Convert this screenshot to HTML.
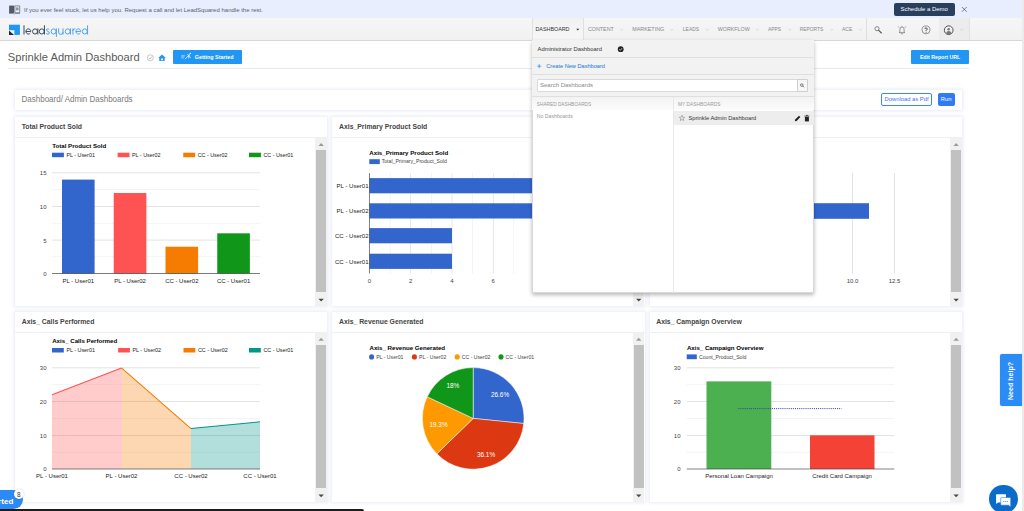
<!DOCTYPE html><html><head><meta charset="utf-8"><title>Sprinkle Admin Dashboard</title><style>
html,body{margin:0;padding:0;background:#fff;}
body{width:1024px;height:511px;overflow:hidden;position:relative;font-family:"Liberation Sans",sans-serif;}
.t{position:absolute;white-space:nowrap;line-height:1;}
.b{position:absolute;box-sizing:border-box;}
svg{position:absolute;left:0;top:0;overflow:visible;}
svg text{font-family:"Liberation Sans",sans-serif;}
.card{background:#fff;box-shadow:0 0 3px 1px rgba(228,232,246,.85);}
.hd{background:#fff;border-bottom:0.9px solid #f0f0f3;}
</style></head><body>
<div class="b " style="left:0.00px;top:0.00px;width:1024.00px;height:18.00px;background:#e8eefe;"></div>
<svg class="tx" width="1024" height="511"><text x="24.00" y="12" font-size="6.0" fill="#5a5f6b">If you ever feel stuck, let us help you. Request a call and let LeadSquared handle the rest.</text></svg>
<div class="b " style="left:893.75px;top:2.75px;width:60.75px;height:13.00px;background:#293f5e;border-radius:2px;"></div>
<svg class="tx" width="1024" height="511"><text x="924.20" y="11" font-size="5.94" fill="#fff" text-anchor="middle">Schedule a Demo</text></svg>
<div class="b " style="left:0.00px;top:18.20px;width:1024.00px;height:22.40px;background:linear-gradient(#f6f6f6,#f1f1f1);border-bottom:0.8px solid #d8d8d8;"></div>
<div class="b " style="left:531.50px;top:18.20px;width:52.10px;height:22.80px;background:linear-gradient(#f1f1f1,#f7f7f7);border-left:0.7px solid #e0e0e0;border-right:0.7px solid #e0e0e0;"></div>
<div class="b " style="left:938.75px;top:18.20px;width:30.85px;height:21.80px;background:#ececec;border-right:0.7px solid #e2e2e2;"></div>
<div class="b " style="left:866.00px;top:18.20px;width:0.80px;height:21.80px;background:#dedede;"></div>
<svg class="tx" width="1024" height="511"><text x="535.50" y="31" font-size="5.37" fill="#333">DASHBOARD</text></svg>
<svg class="tx" width="1024" height="511"><text x="588.00" y="31" font-size="5.33" fill="#888">CONTENT</text></svg>
<svg class="tx" width="1024" height="511"><text x="632.25" y="31" font-size="5.38" fill="#888">MARKETING</text></svg>
<svg class="tx" width="1024" height="511"><text x="682.75" y="31" font-size="5.03" fill="#888">LEADS</text></svg>
<svg class="tx" width="1024" height="511"><text x="717.75" y="31" font-size="5.33" fill="#888">WORKFLOW</text></svg>
<svg class="tx" width="1024" height="511"><text x="768.00" y="31" font-size="4.87" fill="#888">APPS</text></svg>
<svg class="tx" width="1024" height="511"><text x="799.75" y="31" font-size="4.88" fill="#888">REPORTS</text></svg>
<svg class="tx" width="1024" height="511"><text x="842.00" y="31" font-size="4.98" fill="#888">ACE</text></svg>
<svg class="tx" width="1024" height="511"><text x="7.75" y="61" font-size="11.15" fill="#5a5a5a">Sprinkle Admin Dashboard</text></svg>
<div class="b " style="left:172.90px;top:50.00px;width:69.10px;height:13.60px;background:#2196f3;border-radius:1px;"></div>
<svg class="tx" width="1024" height="511"><text x="194.70" y="59" font-size="5.4" fill="#fff" font-weight="700">Getting Started</text></svg>
<div class="b " style="left:911.00px;top:50.00px;width:57.80px;height:13.70px;background:#2196f3;border-radius:1px;"></div>
<svg class="tx" width="1024" height="511"><text x="940.10" y="59" font-size="5.24" fill="#fff" font-weight="700" text-anchor="middle">Edit Report URL</text></svg>
<div class="b " style="left:7.50px;top:68.00px;width:961.30px;height:0.90px;background:#e9e9e9;"></div>
<div class="b card" style="left:14.90px;top:89.50px;width:947.20px;height:20.10px;"></div>
<svg class="tx" width="1024" height="511"><text x="21.60" y="102" font-size="8.5" fill="#7a7a7a" textLength="111" lengthAdjust="spacingAndGlyphs">Dashboard/ Admin Dashboards</text></svg>
<div class="b " style="left:881.00px;top:93.30px;width:51.00px;height:12.60px;border:0.75px solid #3d84ff;border-radius:2px;background:#fff;"></div>
<svg class="tx" width="1024" height="511"><text x="906.60" y="101" font-size="5.82" fill="#4a6ff5" text-anchor="middle">Download as Pdf</text></svg>
<div class="b " style="left:937.90px;top:93.30px;width:16.70px;height:12.60px;background:#2f7bf6;border-radius:2px;"></div>
<svg class="tx" width="1024" height="511"><text x="946.10" y="101" font-size="5.72" fill="#fff" text-anchor="middle">Run</text></svg>
<div class="b card" style="left:15.00px;top:116.70px;width:312.00px;height:189.60px;"></div>
<div class="b hd" style="left:15.00px;top:116.70px;width:312.00px;height:21.00px;"></div>
<svg class="tx" width="1024" height="511"><text x="21.70" y="129" font-size="6.85" fill="#444" font-weight="700">Total Product Sold</text></svg>
<div class="b " style="left:315.40px;top:137.70px;width:11.30px;height:168.60px;background:#f1f1f1;"></div>
<div class="b " style="left:316.35px;top:150.10px;width:9.65px;height:142.20px;background:#c1c1c1;"></div>
<svg width="1024" height="511"><path d="M318.45 146.00L321.15 142.90L323.85 146.00Z" fill="#9a9a9a"/><path d="M318.45 298.80L321.15 301.60L323.85 298.80Z" fill="#484848"/></svg>
<div class="b card" style="left:332.30px;top:116.70px;width:312.30px;height:189.60px;"></div>
<div class="b hd" style="left:332.30px;top:116.70px;width:312.30px;height:21.00px;"></div>
<svg class="tx" width="1024" height="511"><text x="339.00" y="129" font-size="6.85" fill="#444" font-weight="700">Axis_Primary Product Sold</text></svg>
<div class="b " style="left:633.00px;top:137.70px;width:11.30px;height:168.60px;background:#f1f1f1;"></div>
<div class="b " style="left:633.95px;top:150.10px;width:9.65px;height:142.20px;background:#c1c1c1;"></div>
<svg width="1024" height="511"><path d="M636.05 146.00L638.75 142.90L641.45 146.00Z" fill="#9a9a9a"/><path d="M636.05 298.80L638.75 301.60L641.45 298.80Z" fill="#484848"/></svg>
<div class="b card" style="left:649.50px;top:116.70px;width:312.50px;height:189.60px;"></div>
<div class="b hd" style="left:649.50px;top:116.70px;width:312.50px;height:21.00px;"></div>
<div class="b " style="left:950.40px;top:137.70px;width:11.30px;height:168.60px;background:#f1f1f1;"></div>
<div class="b " style="left:951.35px;top:150.10px;width:9.65px;height:142.20px;background:#c1c1c1;"></div>
<svg width="1024" height="511"><path d="M953.45 146.00L956.15 142.90L958.85 146.00Z" fill="#9a9a9a"/><path d="M953.45 298.80L956.15 301.60L958.85 298.80Z" fill="#484848"/></svg>
<div class="b card" style="left:15.00px;top:311.80px;width:312.00px;height:190.10px;"></div>
<div class="b hd" style="left:15.00px;top:311.80px;width:312.00px;height:21.10px;"></div>
<svg class="tx" width="1024" height="511"><text x="21.70" y="324" font-size="6.85" fill="#444" font-weight="700">Axis_ Calls Performed</text></svg>
<div class="b " style="left:315.40px;top:332.90px;width:11.30px;height:169.00px;background:#f1f1f1;"></div>
<div class="b " style="left:316.35px;top:344.60px;width:9.65px;height:143.30px;background:#c1c1c1;"></div>
<svg width="1024" height="511"><path d="M318.45 340.70L321.15 337.70L323.85 340.70Z" fill="#9a9a9a"/><path d="M318.45 494.40L321.15 497.20L323.85 494.40Z" fill="#484848"/></svg>
<div class="b card" style="left:332.30px;top:311.80px;width:312.30px;height:190.10px;"></div>
<div class="b hd" style="left:332.30px;top:311.80px;width:312.30px;height:21.10px;"></div>
<svg class="tx" width="1024" height="511"><text x="339.00" y="324" font-size="6.85" fill="#444" font-weight="700">Axis_ Revenue Generated</text></svg>
<div class="b " style="left:633.00px;top:332.90px;width:11.30px;height:169.00px;background:#f1f1f1;"></div>
<div class="b " style="left:633.95px;top:344.60px;width:9.65px;height:143.30px;background:#c1c1c1;"></div>
<svg width="1024" height="511"><path d="M636.05 340.70L638.75 337.70L641.45 340.70Z" fill="#9a9a9a"/><path d="M636.05 494.40L638.75 497.20L641.45 494.40Z" fill="#484848"/></svg>
<div class="b card" style="left:649.50px;top:311.80px;width:312.50px;height:190.10px;"></div>
<div class="b hd" style="left:649.50px;top:311.80px;width:312.50px;height:21.10px;"></div>
<svg class="tx" width="1024" height="511"><text x="656.20" y="324" font-size="6.85" fill="#444" font-weight="700">Axis_ Campaign Overview</text></svg>
<div class="b " style="left:950.40px;top:332.90px;width:11.30px;height:169.00px;background:#f1f1f1;"></div>
<div class="b " style="left:951.35px;top:344.60px;width:9.65px;height:143.30px;background:#c1c1c1;"></div>
<svg width="1024" height="511"><path d="M953.45 340.70L956.15 337.70L958.85 340.70Z" fill="#9a9a9a"/><path d="M953.45 494.40L956.15 497.20L958.85 494.40Z" fill="#484848"/></svg>
<svg width="1024" height="511" viewBox="0 0 1024 511"><text x="52.20" y="148.00" font-size="6.13" fill="#000" font-weight="700" text-anchor="start">Total Product Sold</text><rect x="52.00" y="152.70" width="11.90" height="4.50" fill="#3366cc"/><text x="66.40" y="157.00" font-size="5.38" fill="#222" font-weight="400" text-anchor="start">PL - User01</text><rect x="117.60" y="152.70" width="11.90" height="4.50" fill="#ff5252"/><text x="132.00" y="157.00" font-size="5.38" fill="#222" font-weight="400" text-anchor="start">PL - User02</text><rect x="183.25" y="152.70" width="11.90" height="4.50" fill="#f57c00"/><text x="197.65" y="157.00" font-size="5.38" fill="#222" font-weight="400" text-anchor="start">CC - User02</text><rect x="249.00" y="152.70" width="11.90" height="4.50" fill="#109618"/><text x="263.40" y="157.00" font-size="5.38" fill="#222" font-weight="400" text-anchor="start">CC - User01</text><rect x="52.00" y="256.54" width="208.00" height="0.55" fill="#ebebeb"/><rect x="52.00" y="222.97" width="208.00" height="0.55" fill="#ebebeb"/><rect x="52.00" y="189.40" width="208.00" height="0.55" fill="#ebebeb"/><rect x="52.00" y="239.76" width="208.00" height="0.55" fill="#cccccc"/><rect x="52.00" y="206.19" width="208.00" height="0.55" fill="#cccccc"/><rect x="52.00" y="172.62" width="208.00" height="0.55" fill="#cccccc"/><text x="46.50" y="276.10" font-size="6.0" fill="#444" font-weight="400" text-anchor="end">0</text><text x="46.50" y="242.53" font-size="6.0" fill="#444" font-weight="400" text-anchor="end">5</text><text x="46.50" y="208.96" font-size="6.0" fill="#444" font-weight="400" text-anchor="end">10</text><text x="46.50" y="175.39" font-size="6.0" fill="#444" font-weight="400" text-anchor="end">15</text><rect x="62.00" y="179.60" width="32.60" height="94.00" fill="#3366cc"/><text x="78.30" y="283.20" font-size="6.0" fill="#222" font-weight="400" text-anchor="middle">PL - User01</text><rect x="113.75" y="193.03" width="32.60" height="80.57" fill="#ff5252"/><text x="130.05" y="283.20" font-size="6.0" fill="#222" font-weight="400" text-anchor="middle">PL - User02</text><rect x="165.50" y="246.74" width="32.60" height="26.86" fill="#f57c00"/><text x="181.80" y="283.20" font-size="6.0" fill="#222" font-weight="400" text-anchor="middle">CC - User02</text><rect x="217.25" y="233.32" width="32.60" height="40.28" fill="#109618"/><text x="233.55" y="283.20" font-size="6.0" fill="#222" font-weight="400" text-anchor="middle">CC - User01</text><rect x="52.00" y="273.05" width="208.00" height="0.70" fill="#444"/><text x="369.30" y="155.00" font-size="6.13" fill="#000" font-weight="700" text-anchor="start">Axis_Primary Product Sold</text><rect x="369.30" y="159.20" width="10.50" height="4.90" fill="#3366cc"/><text x="381.70" y="163.00" font-size="5.15" fill="#444" font-weight="400" text-anchor="start">Total_Primary_Product_Sold</text><rect x="389.85" y="173.00" width="0.55" height="100.50" fill="#ebebeb"/><rect x="431.09" y="173.00" width="0.55" height="100.50" fill="#ebebeb"/><rect x="472.33" y="173.00" width="0.55" height="100.50" fill="#ebebeb"/><rect x="513.57" y="173.00" width="0.55" height="100.50" fill="#ebebeb"/><rect x="410.47" y="173.00" width="0.55" height="100.50" fill="#d6d6d6"/><rect x="451.71" y="173.00" width="0.55" height="100.50" fill="#d6d6d6"/><rect x="492.95" y="173.00" width="0.55" height="100.50" fill="#d6d6d6"/><rect x="534.19" y="173.00" width="0.55" height="100.50" fill="#d6d6d6"/><text x="369.50" y="283.20" font-size="6.0" fill="#444" font-weight="400" text-anchor="middle">0</text><text x="410.74" y="283.20" font-size="6.0" fill="#444" font-weight="400" text-anchor="middle">2</text><text x="451.98" y="283.20" font-size="6.0" fill="#444" font-weight="400" text-anchor="middle">4</text><text x="493.22" y="283.20" font-size="6.0" fill="#444" font-weight="400" text-anchor="middle">6</text><rect x="369.50" y="178.10" width="185.58" height="15.20" fill="#3366cc"/><text x="368.60" y="188.00" font-size="6.05" fill="#222" font-weight="400" text-anchor="end">PL - User01</text><rect x="369.50" y="203.30" width="185.58" height="15.20" fill="#3366cc"/><text x="368.60" y="213.20" font-size="6.05" fill="#222" font-weight="400" text-anchor="end">PL - User02</text><rect x="369.50" y="228.10" width="82.48" height="15.20" fill="#3366cc"/><text x="368.60" y="238.00" font-size="6.05" fill="#222" font-weight="400" text-anchor="end">CC - User02</text><rect x="369.50" y="253.70" width="82.48" height="15.20" fill="#3366cc"/><text x="368.60" y="263.60" font-size="6.05" fill="#222" font-weight="400" text-anchor="end">CC - User01</text><rect x="369.20" y="173.00" width="0.6" height="100.50" fill="#333333"/><rect x="852.33" y="173.00" width="0.55" height="100.50" fill="#cccccc"/><text x="852.60" y="283.20" font-size="6.0" fill="#444" font-weight="400" text-anchor="middle">10.0</text><rect x="894.23" y="173.00" width="0.55" height="100.50" fill="#cccccc"/><text x="894.50" y="283.20" font-size="6.0" fill="#444" font-weight="400" text-anchor="middle">12.5</text><rect x="685.00" y="203.20" width="184.00" height="15.60" fill="#3366cc"/><text x="52.20" y="343.00" font-size="6.13" fill="#000" font-weight="700" text-anchor="start">Axis_ Calls Performed</text><rect x="52.00" y="348.00" width="11.80" height="4.50" fill="#3366cc"/><text x="66.40" y="352.00" font-size="5.38" fill="#222" font-weight="400" text-anchor="start">PL - User01</text><rect x="118.10" y="348.00" width="11.80" height="4.50" fill="#ff5252"/><text x="132.50" y="352.00" font-size="5.38" fill="#222" font-weight="400" text-anchor="start">PL - User02</text><rect x="183.50" y="348.00" width="11.80" height="4.50" fill="#f57c00"/><text x="197.90" y="352.00" font-size="5.38" fill="#222" font-weight="400" text-anchor="start">CC - User02</text><rect x="249.00" y="348.00" width="11.80" height="4.50" fill="#009688"/><text x="263.40" y="352.00" font-size="5.38" fill="#222" font-weight="400" text-anchor="start">CC - User01</text><rect x="52.00" y="451.88" width="208.00" height="0.55" fill="#ebebeb"/><rect x="52.00" y="418.18" width="208.00" height="0.55" fill="#ebebeb"/><rect x="52.00" y="384.48" width="208.00" height="0.55" fill="#ebebeb"/><rect x="52.00" y="435.03" width="208.00" height="0.55" fill="#cccccc"/><rect x="52.00" y="401.33" width="208.00" height="0.55" fill="#cccccc"/><rect x="52.00" y="367.62" width="208.00" height="0.55" fill="#cccccc"/><text x="46.50" y="471.30" font-size="6.0" fill="#444" font-weight="400" text-anchor="end">0</text><text x="46.50" y="437.60" font-size="6.0" fill="#444" font-weight="400" text-anchor="end">10</text><text x="46.50" y="403.90" font-size="6.0" fill="#444" font-weight="400" text-anchor="end">20</text><text x="46.50" y="370.20" font-size="6.0" fill="#444" font-weight="400" text-anchor="end">30</text><path d="M52.00 469.0L52.00 394.86L121.50 367.90L121.50 469.0Z" fill="rgba(255,82,82,0.3)" shape-rendering="crispEdges"/><path d="M121.50 469.0L121.50 367.90L191.00 428.56L191.00 469.0Z" fill="rgba(245,124,0,0.3)" shape-rendering="crispEdges"/><path d="M191.00 469.0L191.00 428.56L260.00 421.82L260.00 469.0Z" fill="rgba(0,150,136,0.3)" shape-rendering="crispEdges"/><path d="M52.00 394.86L121.50 367.90" stroke="#ff5252" stroke-width="1.05" fill="none"/><path d="M121.50 367.90L191.00 428.56" stroke="#f57c00" stroke-width="1.05" fill="none"/><path d="M191.00 428.56L260.00 421.82" stroke="#009688" stroke-width="1.05" fill="none"/><rect x="52.00" y="468.70" width="208.00" height="0.6" fill="#333333"/><text x="52.00" y="478.00" font-size="6.0" fill="#222" font-weight="400" text-anchor="middle">PL - User01</text><text x="121.50" y="478.00" font-size="6.0" fill="#222" font-weight="400" text-anchor="middle">PL - User02</text><text x="191.00" y="478.00" font-size="6.0" fill="#222" font-weight="400" text-anchor="middle">CC - User02</text><text x="260.00" y="478.00" font-size="6.0" fill="#222" font-weight="400" text-anchor="middle">CC - User01</text><text x="369.50" y="350.00" font-size="6.13" fill="#000" font-weight="700" text-anchor="start">Axis_ Revenue Generated</text><circle cx="371.6" cy="356.9" r="2.55" fill="#3366cc"/><text x="376.20" y="359.00" font-size="5.15" fill="#444" font-weight="400" text-anchor="start">PL - User01</text><circle cx="414.4" cy="356.9" r="2.55" fill="#dc3912"/><text x="419.00" y="359.00" font-size="5.15" fill="#444" font-weight="400" text-anchor="start">PL - User02</text><circle cx="457.2" cy="356.9" r="2.55" fill="#ff9900"/><text x="461.80" y="359.00" font-size="5.15" fill="#444" font-weight="400" text-anchor="start">CC - User02</text><circle cx="501" cy="356.9" r="2.55" fill="#109618"/><text x="505.60" y="359.00" font-size="5.15" fill="#444" font-weight="400" text-anchor="start">CC - User01</text><path d="M473.2 418.4L473.20 367.60A50.8 50.8 0 0 1 523.74 423.50Z" fill="#3366cc" stroke="#fff" stroke-width="0.5"/><path d="M473.2 418.4L523.74 423.50A50.8 50.8 0 0 1 436.83 453.87Z" fill="#dc3912" stroke="#fff" stroke-width="0.5"/><path d="M473.2 418.4L436.83 453.87A50.8 50.8 0 0 1 427.23 396.77Z" fill="#ff9900" stroke="#fff" stroke-width="0.5"/><path d="M473.2 418.4L427.23 396.77A50.8 50.8 0 0 1 473.20 367.60Z" fill="#109618" stroke="#fff" stroke-width="0.5"/><text x="500.00" y="397.00" font-size="6.4" fill="#fff" font-weight="400" text-anchor="middle">26.6%</text><text x="486.00" y="457.00" font-size="6.4" fill="#fff" font-weight="400" text-anchor="middle">36.1%</text><text x="438.50" y="427.00" font-size="6.4" fill="#fff" font-weight="400" text-anchor="middle">19.3%</text><text x="452.90" y="388.00" font-size="6.4" fill="#fff" font-weight="400" text-anchor="middle">18%</text><text x="686.90" y="350.00" font-size="6.13" fill="#000" font-weight="700" text-anchor="start">Axis_ Campaign Overview</text><rect x="686.70" y="354.40" width="10.10" height="4.80" fill="#3366cc"/><text x="699.00" y="359.00" font-size="5.15" fill="#444" font-weight="400" text-anchor="start">Count_Product_Sold</text><rect x="686.70" y="451.88" width="207.60" height="0.55" fill="#ebebeb"/><rect x="686.70" y="418.18" width="207.60" height="0.55" fill="#ebebeb"/><rect x="686.70" y="384.48" width="207.60" height="0.55" fill="#ebebeb"/><rect x="686.70" y="435.03" width="207.60" height="0.55" fill="#cccccc"/><rect x="686.70" y="401.33" width="207.60" height="0.55" fill="#cccccc"/><rect x="686.70" y="367.62" width="207.60" height="0.55" fill="#cccccc"/><text x="680.50" y="471.30" font-size="6.0" fill="#444" font-weight="400" text-anchor="end">0</text><text x="680.50" y="437.60" font-size="6.0" fill="#444" font-weight="400" text-anchor="end">10</text><text x="680.50" y="403.90" font-size="6.0" fill="#444" font-weight="400" text-anchor="end">20</text><text x="680.50" y="370.20" font-size="6.0" fill="#444" font-weight="400" text-anchor="end">30</text><rect x="706.50" y="381.38" width="64.80" height="87.62" fill="#4caf50"/><rect x="810.00" y="435.30" width="64.50" height="33.70" fill="#f44336"/><path d="M738.3 408.6L841.5 408.6" stroke="#3a3fb0" stroke-width="1" stroke-dasharray="1.05 1.05" fill="none"/><rect x="686.70" y="468.70" width="207.60" height="0.6" fill="#333333"/><text x="739.00" y="478.00" font-size="6.0" fill="#222" font-weight="400" text-anchor="middle">Personal Loan Campaign</text><text x="842.00" y="478.00" font-size="6.0" fill="#222" font-weight="400" text-anchor="middle">Credit Card Campaign</text></svg>
<div class="b " style="left:532.00px;top:40.40px;width:282.00px;height:252.90px;background:#fff;box-shadow:0 1.5px 4px rgba(0,0,0,.28);border:0.5px solid #d9d9d9;border-top:none;"></div>
<div class="b " style="left:532.00px;top:40.40px;width:282.00px;height:17.60px;background:#f2f2f2;border-bottom:0.6px solid #dfdfdf;"></div>
<div class="b " style="left:532.00px;top:58.00px;width:282.00px;height:16.70px;background:#f2f2f2;border-bottom:0.6px solid #dfdfdf;"></div>
<div class="b " style="left:532.00px;top:74.70px;width:282.00px;height:22.00px;background:#f2f2f2;border-bottom:0.6px solid #dfdfdf;"></div>
<svg class="tx" width="1024" height="511"><text x="537.50" y="51" font-size="5.83" fill="#333">Administrator Dashboard</text></svg>
<svg class="tx" width="1024" height="511"><text x="546.30" y="68" font-size="5.61" fill="#1976d2">Create New Dashboard</text></svg>
<div class="b " style="left:536.60px;top:79.40px;width:271.40px;height:12.30px;background:#fff;border:0.6px solid #d9d9d9;border-radius:1px;"></div>
<div class="b " style="left:796.50px;top:79.40px;width:11.50px;height:12.30px;background:#f7f7f7;border:0.6px solid #cfcfcf;border-radius:0 1px 1px 0;"></div>
<svg class="tx" width="1024" height="511"><text x="540.00" y="87" font-size="6.0" fill="#8a8a8a">Search Dashboards</text></svg>
<div class="b " style="left:532.00px;top:96.70px;width:282.00px;height:13.30px;background:linear-gradient(#f3f3f3,#fcfcfc);"></div>
<svg class="tx" width="1024" height="511"><text x="536.80" y="106" font-size="4.76" fill="#999">SHARED DASHBOARDS</text></svg>
<svg class="tx" width="1024" height="511"><text x="536.80" y="118" font-size="5.18" fill="#999">No Dashboards</text></svg>
<div class="b " style="left:673.00px;top:96.70px;width:0.60px;height:196.60px;background:#e8e8e8;"></div>
<svg class="tx" width="1024" height="511"><text x="678.00" y="106" font-size="4.85" fill="#999">MY DASHBOARDS</text></svg>
<div class="b " style="left:673.60px;top:111.20px;width:140.20px;height:13.50px;background:#ededed;"></div>
<svg class="tx" width="1024" height="511"><text x="688.40" y="120" font-size="5.74" fill="#333">Sprinkle Admin Dashboard</text></svg>
<svg width="1024" height="511" viewBox="0 0 1024 511"><path d="M9.1 5.6L14.2 5.6L14.2 13.0L9.1 13.0Z" fill="#555a66"/><path d="M14.9 5.9L19.7 5.9L19.7 12.7L14.9 12.7Z" fill="#f4f5fb" stroke="#555a66" stroke-width="0.7"/><rect x="16.1" y="7.4" width="2.5" height="3.0" fill="#8d909a"/><path d="M9 13.5L13.6 13.5L14.5 14.0L15.4 13.5L20 13.5" stroke="#555a66" stroke-width="0.6" fill="none"/><path d="M961.9 7.0L966.7 11.8M966.7 7.0L961.9 11.8" stroke="#555" stroke-width="0.75" fill="none"/><rect x="9" y="24.7" width="10.9" height="10.2" fill="#2196f3"/><rect x="9" y="30.2" width="5.4" height="4.7" fill="#f5f5f5"/><path d="M9 30.4L9 34.9L14.0 34.9Z" fill="#16283f"/><path d="M24 25.3V34.5M25.90 31.45H30.80A2.45 2.6 0 1 0 30.28 33.05M32.55 31.45A2.45 2.6 0 1 0 37.45 31.45A2.45 2.6 0 1 0 32.55 31.45ZM37.85 28.4V34.5M39.30 31.45A2.45 2.6 0 1 0 44.20 31.45A2.45 2.6 0 1 0 39.30 31.45ZM44.45 25.3V34.5" fill="none" stroke="#2c4055" stroke-width="0.95"/><path d="M49.3 29.7C48.7 28.5 46.5 28.5 46.5 30.0C46.5 31.5 49.4 31.2 49.4 33.0C49.4 34.6 46.8 34.5 46.1 33.2M51.15 31.45A2.45 2.6 0 1 0 56.05 31.45A2.45 2.6 0 1 0 51.15 31.45ZM56.4 28.4V36.9M58.6 28.4V32.1A2.2 2.3 0 0 0 63 32.1M63 28.4V34.5M65.25 31.45A2.45 2.6 0 1 0 70.15 31.45A2.45 2.6 0 1 0 65.25 31.45ZM70.5 28.4V34.5M72.9 28.4V34.5M72.9 30.8A2.3 2.3 0 0 1 75.3 28.8M75.95 31.45H80.85A2.45 2.6 0 1 0 80.33 33.05M82.35 31.45A2.45 2.6 0 1 0 87.25 31.45A2.45 2.6 0 1 0 82.35 31.45ZM87.55 25.3V34.5" fill="none" stroke="#45a0f6" stroke-width="0.95"/><path d="M576.2 28.8L579.3 28.8L577.75 30.6Z" fill="#333"/><path d="M620.45 29.1L621.75 30.4L623.05 29.1" stroke="#c4c4c4" stroke-width="0.6" fill="none"/><path d="M670.45 29.1L671.75 30.4L673.05 29.1" stroke="#c4c4c4" stroke-width="0.6" fill="none"/><path d="M706.20 29.1L707.50 30.4L708.80 29.1" stroke="#c4c4c4" stroke-width="0.6" fill="none"/><path d="M756.20 29.1L757.50 30.4L758.80 29.1" stroke="#c4c4c4" stroke-width="0.6" fill="none"/><path d="M788.45 29.1L789.75 30.4L791.05 29.1" stroke="#c4c4c4" stroke-width="0.6" fill="none"/><path d="M830.20 29.1L831.50 30.4L832.80 29.1" stroke="#c4c4c4" stroke-width="0.6" fill="none"/><path d="M859.20 29.1L860.50 30.4L861.80 29.1" stroke="#c4c4c4" stroke-width="0.6" fill="none"/><path d="M960.45 29.1L961.75 30.4L963.05 29.1" stroke="#c4c4c4" stroke-width="0.6" fill="none"/><circle cx="877.0" cy="28.7" r="2.1" fill="none" stroke="#666" stroke-width="0.75"/><path d="M878.7 30.4L881.4 33.0" stroke="#555" stroke-width="1.1" stroke-linecap="round"/><path d="M899.9 32.0L899.9 29.4A2.1 2.4 0 0 1 904.1 29.4L904.1 32.0L904.9 32.6L899.1 32.6Z" fill="none" stroke="#666" stroke-width="0.65" stroke-linejoin="round"/><path d="M901.2 33.3A0.8 0.8 0 0 0 902.8 33.3" fill="none" stroke="#666" stroke-width="0.6"/><path d="M899.2 27.7L898.2 26.5M904.8 27.7L905.8 26.5M902 26.7L902 25.9" stroke="#666" stroke-width="0.7"/><circle cx="926" cy="29.9" r="4.0" fill="none" stroke="#6a6a6a" stroke-width="0.7"/><path d="M924.95 29.0A1.1 1.1 0 1 1 926.55 29.95Q926.05 30.3 926.05 31.1" fill="none" stroke="#3a3a3a" stroke-width="1.0"/><circle cx="926.05" cy="32.25" r="0.5" fill="#444"/><circle cx="948.7" cy="30.2" r="4.35" fill="#f0f0f0" stroke="#454545" stroke-width="0.9"/><circle cx="948.7" cy="29.2" r="1.25" fill="#777"/><path d="M946.2 33.6A2.5 2.6 0 0 1 951.2 33.6A4.3 4.3 0 0 1 946.2 33.6Z" fill="#777"/><circle cx="150.3" cy="57.8" r="3.0" fill="none" stroke="#aaa" stroke-width="0.65"/><path d="M148.7 57.9L149.9 59.1L152.0 56.6" stroke="#aaa" stroke-width="0.7" fill="none"/><path d="M158.2 58.0L162 54.6L165.8 58.0L164.7 58.0L164.7 61.0L159.3 61.0L159.3 58.0Z" fill="#2196f3"/><rect x="161.1" y="58.5" width="1.8" height="1.8" fill="#fff"/><path d="M181.2 55.6H185.2M181.2 56.8H184.6M181.2 58.0H184.0" stroke="#dbeefe" stroke-width="0.55"/><path d="M185.0 59.2L188.0 56.0L190.6 53.6M187.2 54.6L189.4 55.6L188.4 58.4M188.0 56.0L190.8 57.6" stroke="#fff" stroke-width="0.7" fill="none"/><circle cx="190.3" cy="53.4" r="0.7" fill="#fff"/><circle cx="620.7" cy="49.2" r="2.9" fill="#222"/><path d="M619.3 49.3L620.3 50.3L622.1 48.2" stroke="#fff" stroke-width="0.7" fill="none"/><path d="M537.2 66.2H541.2M539.2 64.2V68.2" stroke="#1e88e5" stroke-width="0.7"/><circle cx="801.8" cy="85.1" r="1.3" fill="none" stroke="#333" stroke-width="0.6"/><path d="M802.8 86.1L804.0 87.3" stroke="#333" stroke-width="0.7"/><path d="M682.00 115.30L682.73 117.19L684.76 117.30L683.19 118.59L683.70 120.55L682.00 119.45L680.30 120.55L680.81 118.59L679.24 117.30L681.27 117.19Z" fill="none" stroke="#777" stroke-width="0.5"/><path d="M794.8 121.3L795.2 119.5L799.0 115.7L800.4 117.1L796.6 120.9Z" fill="#222"/><path d="M804.9 117.0H808.9V121.4H804.9Z" fill="#222"/><path d="M804.4 116.1H809.4M806.0 115.4H807.8" stroke="#222" stroke-width="0.8"/></svg>
<div class="b " style="left:1022.20px;top:0.00px;width:1.80px;height:511.00px;background:#ebebeb;"></div>
<div class="b " style="left:1000.00px;top:354.00px;width:22.00px;height:52.00px;background:#2b8cf5;border-radius:2px 0 0 2px;box-shadow:0 0 2px rgba(0,0,0,.2);"></div>
<div class="t" style="left:1011px;top:380.5px;font-size:7.05px;color:#fff;font-weight:700;transform:translate(-50%,-50%) rotate(-90deg);">Need help?</div>
<div class="b " style="left:989.30px;top:484.90px;width:28.40px;height:28.40px;background:#0b6bcb;border-radius:50%;"></div>
<svg width="1024" height="511" viewBox="0 0 1024 511"><path d="M996.6 494.2H1005.5Q1006 494.2 1006 494.7V501.9Q1006 502.4 1005.5 502.4H998.2L996.1 504.0V494.7Q996.1 494.2 996.6 494.2Z" fill="#fff"/><path d="M1001.4 497.4H1010.0Q1010.7 497.4 1010.7 498.1V506.9L1008.6 505.2H1001.4Q1000.7 505.2 1000.7 504.5V498.1Q1000.7 497.4 1001.4 497.4Z" fill="#fff" stroke="#0b6bcb" stroke-width="0.5"/><path d="M1003.2 501.5H1008.2" stroke="#4b8fd9" stroke-width="0.8" stroke-dasharray="1.2 0.6"/></svg>
<div class="b " style="left:-10.00px;top:490.00px;width:33.00px;height:19.00px;background:#2b8af7;border-radius:0 9.5px 9.5px 0;"></div>
<svg class="tx" width="1024" height="511"><text x="13.40" y="504" font-size="8.1" fill="#fff" font-weight="700" text-anchor="end">rted</text></svg>
<div class="b " style="left:13.60px;top:489.10px;width:10.40px;height:10.40px;background:#fff;border-radius:50%;box-shadow:0 0 1.5px rgba(0,0,0,.25);"></div>
<svg class="tx" width="1024" height="511"><text x="18.80" y="497" font-size="6.3" fill="#333" text-anchor="middle">8</text></svg>
<div class="b " style="left:0.00px;top:508.60px;width:364.20px;height:4.40px;background:#1c1c1e;border-radius:0 2px 0 0;"></div>
</body></html>
